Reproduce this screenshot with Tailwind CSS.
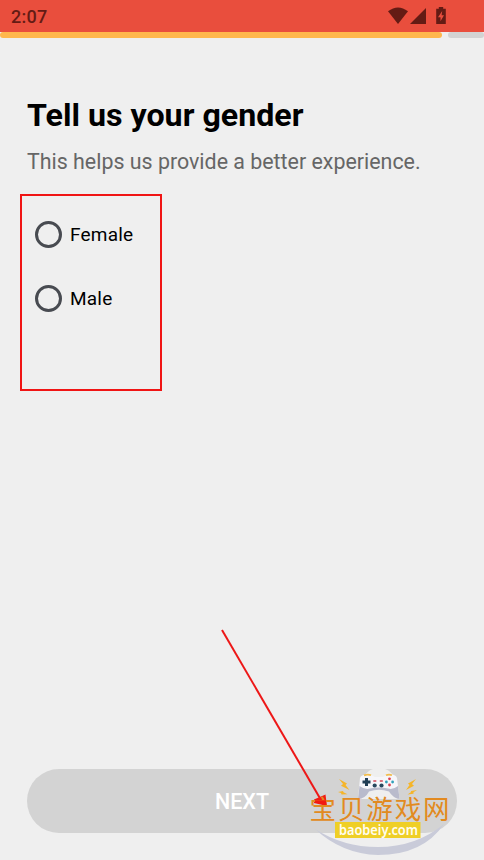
<!DOCTYPE html>
<html lang="en">
<head>
  <meta charset="UTF-8">
  <title>Tell us your gender</title>
  <meta name="viewport" content="width=device-width, initial-scale=1.0">
  <script src="https://cdn.jsdelivr.net/npm/@tailwindcss/browser@4"></script>
</head>
<body class="bg-[#efefef] font-['Roboto',sans-serif]">
  <div class="relative flex flex-col h-[860px] w-[484px] overflow-hidden">

    <!-- STATUS BAR -->
    <header class="flex h-8 shrink-0 items-center justify-between bg-[#e94e3d] pl-[11px] pr-[37px] text-[#641b14]">
      <span class="pt-px text-[18px] font-medium leading-8 tracking-[0.3px]">2:07</span>
      <svg class="h-8 w-[60px]" viewBox="387 0 60 32" fill="currentColor">
        <path d="M388 11.3Q398 3.7 408 11.3L398 24Z"/>
        <path d="M410 24L426 8V24Z"/>
        <path d="M438.8 7h4.4v1.7h2.6V24h-9.6V8.7h2.6z"/>
        <path d="M442.2 11L438 17.2h2.5v4L444 15.2h-2.4z" fill="#e94e3d"/>
      </svg>
    </header>

    <!-- PROGRESS -->
    <div class="flex h-1.5 shrink-0 gap-1.5">
      <div class="w-[442px] rounded-full bg-[#ffb74d]"></div>
      <div class="w-9 rounded-full bg-[#d3d3d3]"></div>
    </div>

    <!-- QUESTION -->
    <main class="flex-1 px-[27px] pt-[56px]">
      <h1 class="text-[32.2px] font-bold leading-[42px] text-black whitespace-nowrap">Tell us your gender</h1>
      <p class="mt-[11px] text-[21.4px] leading-[30px] text-[#666] whitespace-nowrap">This helps us provide a better experience.</p>

      <div class="-ml-[7px] mt-[17px] h-[197px] w-[142px] border-2 border-[#f01414] pl-[13px] pt-[24px]">
        <label class="flex h-7 items-center gap-2">
          <span class="h-[27px] w-[27px] rounded-full border-3 border-[#484b51]"></span>
          <span class="pt-[2px] text-[19px] tracking-[0.2px] text-black">Female</span>
        </label>
        <label class="mt-[36px] flex h-7 items-center gap-2">
          <span class="h-[27px] w-[27px] rounded-full border-3 border-[#484b51]"></span>
          <span class="pt-[2px] text-[19px] tracking-[0.2px] text-black">Male</span>
        </label>
      </div>
    </main>

    <footer class="px-[27px] pb-[27px]">
      <button class="block h-16 w-full rounded-full bg-[#d3d3d3] pt-0.5 text-[21.5px] font-medium text-white">NEXT</button>
    </footer>

    <!-- ARROW + WATERMARK -->
    <svg class="pointer-events-none absolute inset-0" width="484" height="860" viewBox="0 0 484 860">
      <path d="M222 630L321 800" stroke="#ed1717" stroke-width="2"/>

      <path d="M315 829Q343 847 378 847Q416 847 444 824Q423 855 378 855Q342 854 315 829Z" fill="#c9cbd9"/>

      <!-- controller -->
      <path d="M361 799V783Q366 768 379 768Q392 768 397 783V799Z" fill="#efefef"/>
      <path d="M360 778Q361 774.5 367 774.5Q372 774.5 375 777H383Q386 774.5 391 774.5Q396 774.5 397 778L399.5 799Q394 798 390 791Q386 789 379 789Q372 789 368 792Q364 799 358 799Z" fill="#f6f6fa"/>
      <path d="M359.5 786Q365 790 370 788.5Q379 786.5 388 788.5Q393 790 398 786L399.5 799Q393 798 389 791.5Q379 788 369 791.5Q365 799 358 799Z" fill="#b9bbcc"/>
      <path d="M364 775.3Q368 773.8 371 775.3M386 775.3Q389 773.8 392 775.3" fill="none" stroke="#f2bd4b" stroke-width="1.8"/>
      <path d="M366.5 778v8M362.5 782h8" stroke="#203d54" stroke-width="3"/>
      <g fill="#dc4252">
        <circle cx="389.5" cy="778.8" r="1.4"/>
        <circle cx="389.5" cy="785" r="1.4"/>
      </g>
      <g fill="#31a0ba">
        <circle cx="386.4" cy="782" r="1.4"/>
        <circle cx="392.6" cy="782" r="1.4"/>
      </g>
      <path d="M373.3 781h3M379.8 781h3" stroke="#d14555" stroke-width="1.6"/>
      <g fill="#28485e">
        <circle cx="374.7" cy="785.5" r="2.1"/>
        <circle cx="381.5" cy="785.5" r="2.1"/>
      </g>

      <!-- sparks -->
      <g fill="#f5b529">
        <path d="M339 779L347 783.5L345.5 785L349.5 790L341 785.8L343 784Z"/>
        <path d="M338 792L343 791L343.5 792.3L347.5 794.3L341.5 794.5L341 793Z"/>
        <path d="M416 779L408 783.5L409.5 785L406 790L414 785.8L412 784Z"/>
        <path d="M417 790L411 791L410.8 792.3L407.5 794.5L413.5 793.8L413.5 792.3Z"/>
      </g>

      <!-- arrow head -->
      <path d="M325.5 794.5L327 806L314 803V799.5Z" fill="#f21a12"/>
      <text x="309.5" y="818.5" textLength="140" lengthAdjust="spacing" font-family="Noto Sans CJK SC, sans-serif" font-size="26.5" fill="#e28a20">宝贝游戏网</text>
      <path d="M315 801.5h11" stroke="#f21a12" stroke-width="2.5"/>
      <rect x="335" y="822" width="85.5" height="16" fill="#efcf26"/>
      <text x="339" y="834.5" textLength="79" lengthAdjust="spacingAndGlyphs" font-family="Noto Sans, sans-serif" font-size="14" font-weight="600" fill="#fffdf0">baobeiy.com</text>
    </svg>
  </div>
</body>
</html>
